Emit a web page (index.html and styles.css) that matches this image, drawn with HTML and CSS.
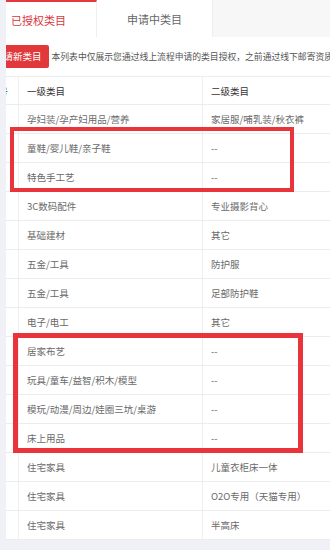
FILE: index.html
```html
<!DOCTYPE html>
<html>
  <head>
    <meta charset="utf-8">
    <link rel="stylesheet" href="styles.css">
  </head>
  <body>
    <div class="page">
      <div class="content">
        <div class="tabs">
          <div class="tab active">已授权类目</div>
          <div class="tab">申请中类目</div>
        </div>
        <div class="notice">
          <div class="btn">申请新类目</div>
          <div class="notice-text">本列表中仅展示您通过线上流程申请的类目授权，之前通过线下邮寄资质申请的类目请联系小二查询</div>
        </div>
        <table class="cats">
          <tr class="head">
            <td class="idx">序号</td>
            <td class="c1">一级类目</td>
            <td class="c2">二级类目</td>
          </tr>
          <tr><td class="idx"></td><td>孕妇装/孕产妇用品/营养</td><td>家居服/哺乳装/秋衣裤</td></tr>
          <tr><td class="idx"></td><td>童鞋/婴儿鞋/亲子鞋</td><td>--</td></tr>
          <tr><td class="idx"></td><td>特色手工艺</td><td>--</td></tr>
          <tr><td class="idx"></td><td>3C数码配件</td><td>专业摄影背心</td></tr>
          <tr><td class="idx"></td><td>基础建材</td><td>其它</td></tr>
          <tr><td class="idx"></td><td>五金/工具</td><td>防护服</td></tr>
          <tr><td class="idx"></td><td>五金/工具</td><td>足部防护鞋</td></tr>
          <tr><td class="idx"></td><td>电子/电工</td><td>其它</td></tr>
          <tr><td class="idx"></td><td>居家布艺</td><td>--</td></tr>
          <tr><td class="idx"></td><td>玩具/童车/益智/积木/模型</td><td>--</td></tr>
          <tr><td class="idx"></td><td>模玩/动漫/周边/娃圈三坑/桌游</td><td>--</td></tr>
          <tr><td class="idx"></td><td>床上用品</td><td>--</td></tr>
          <tr><td class="idx"></td><td>住宅家具</td><td>儿童衣柜床一体</td></tr>
          <tr><td class="idx"></td><td>住宅家具</td><td>O2O专用（天猫专用）</td></tr>
          <tr><td class="idx"></td><td>住宅家具</td><td>半高床</td></tr>
        </table>
      </div>
    </div>
    <!-- annotation boxes drawn over the screenshot -->
    <div class="mark mark-a"></div>
    <div class="mark mark-b"></div>
  </body>
</html>
```

FILE: styles.css
```css
body {
  margin: 0;
  background: #eff1f6;
  font-family: "Noto Sans CJK SC", "Noto Sans", sans-serif;
}

.page {
  margin-left: 6px;
  height: 540px;
  background: #fff;
  overflow: hidden;
}

.content {
  margin-left: -25px;
  width: 460px;
}

.tabs {
  display: flex;
  height: 37px;
  background: #f7f7f7;
}

.tab {
  width: 116px;
  display: flex;
  align-items: center;
  justify-content: center;
  background: #fff;
  color: #666;
  font-size: 11px;
  border-right: 1px solid #eeeeee;
  box-sizing: border-box;
}

.tab.active {
  color: #d9363e;
  border-top: 2px solid #e4393c;
}

.notice {
  display: flex;
  align-items: center;
  height: 39px;
  white-space: nowrap;
}

.btn {
  height: 23px;
  line-height: 23px;
  margin-left: 3px;
  padding: 0 7px 0 10px;
  background: #e1393b;
  color: #fff;
  font-size: 9.5px;
  border-radius: 2px;
}

.notice-text {
  margin-left: 3px;
  font-size: 8.8px;
  color: #555;
}

.cats {
  width: 100%;
  border-collapse: collapse;
  border-top: 1px solid #ececec;
  font-size: 9.5px;
  color: #6a6a6a;
}

.cats td {
  height: 28px;
  padding: 0 0 0 8px;
  border-bottom: 1px solid #ececec;
  border-right: 1px solid #efefef;
  white-space: nowrap;
}

.cats .idx {
  width: 29px;
  color: #999;
}

.cats .c1 {
  width: 175px;
}

.cats .head td {
  height: 27px;
  color: #333;
}

.mark {
  position: absolute;
  border: 4px solid #e9343b;
  box-sizing: border-box;
}

.mark-a {
  left: 10px;
  top: 127px;
  width: 284px;
  height: 65px;
}

.mark-b {
  left: 13px;
  top: 333px;
  width: 290px;
  height: 120px;
  border-width: 5px;
}
```
